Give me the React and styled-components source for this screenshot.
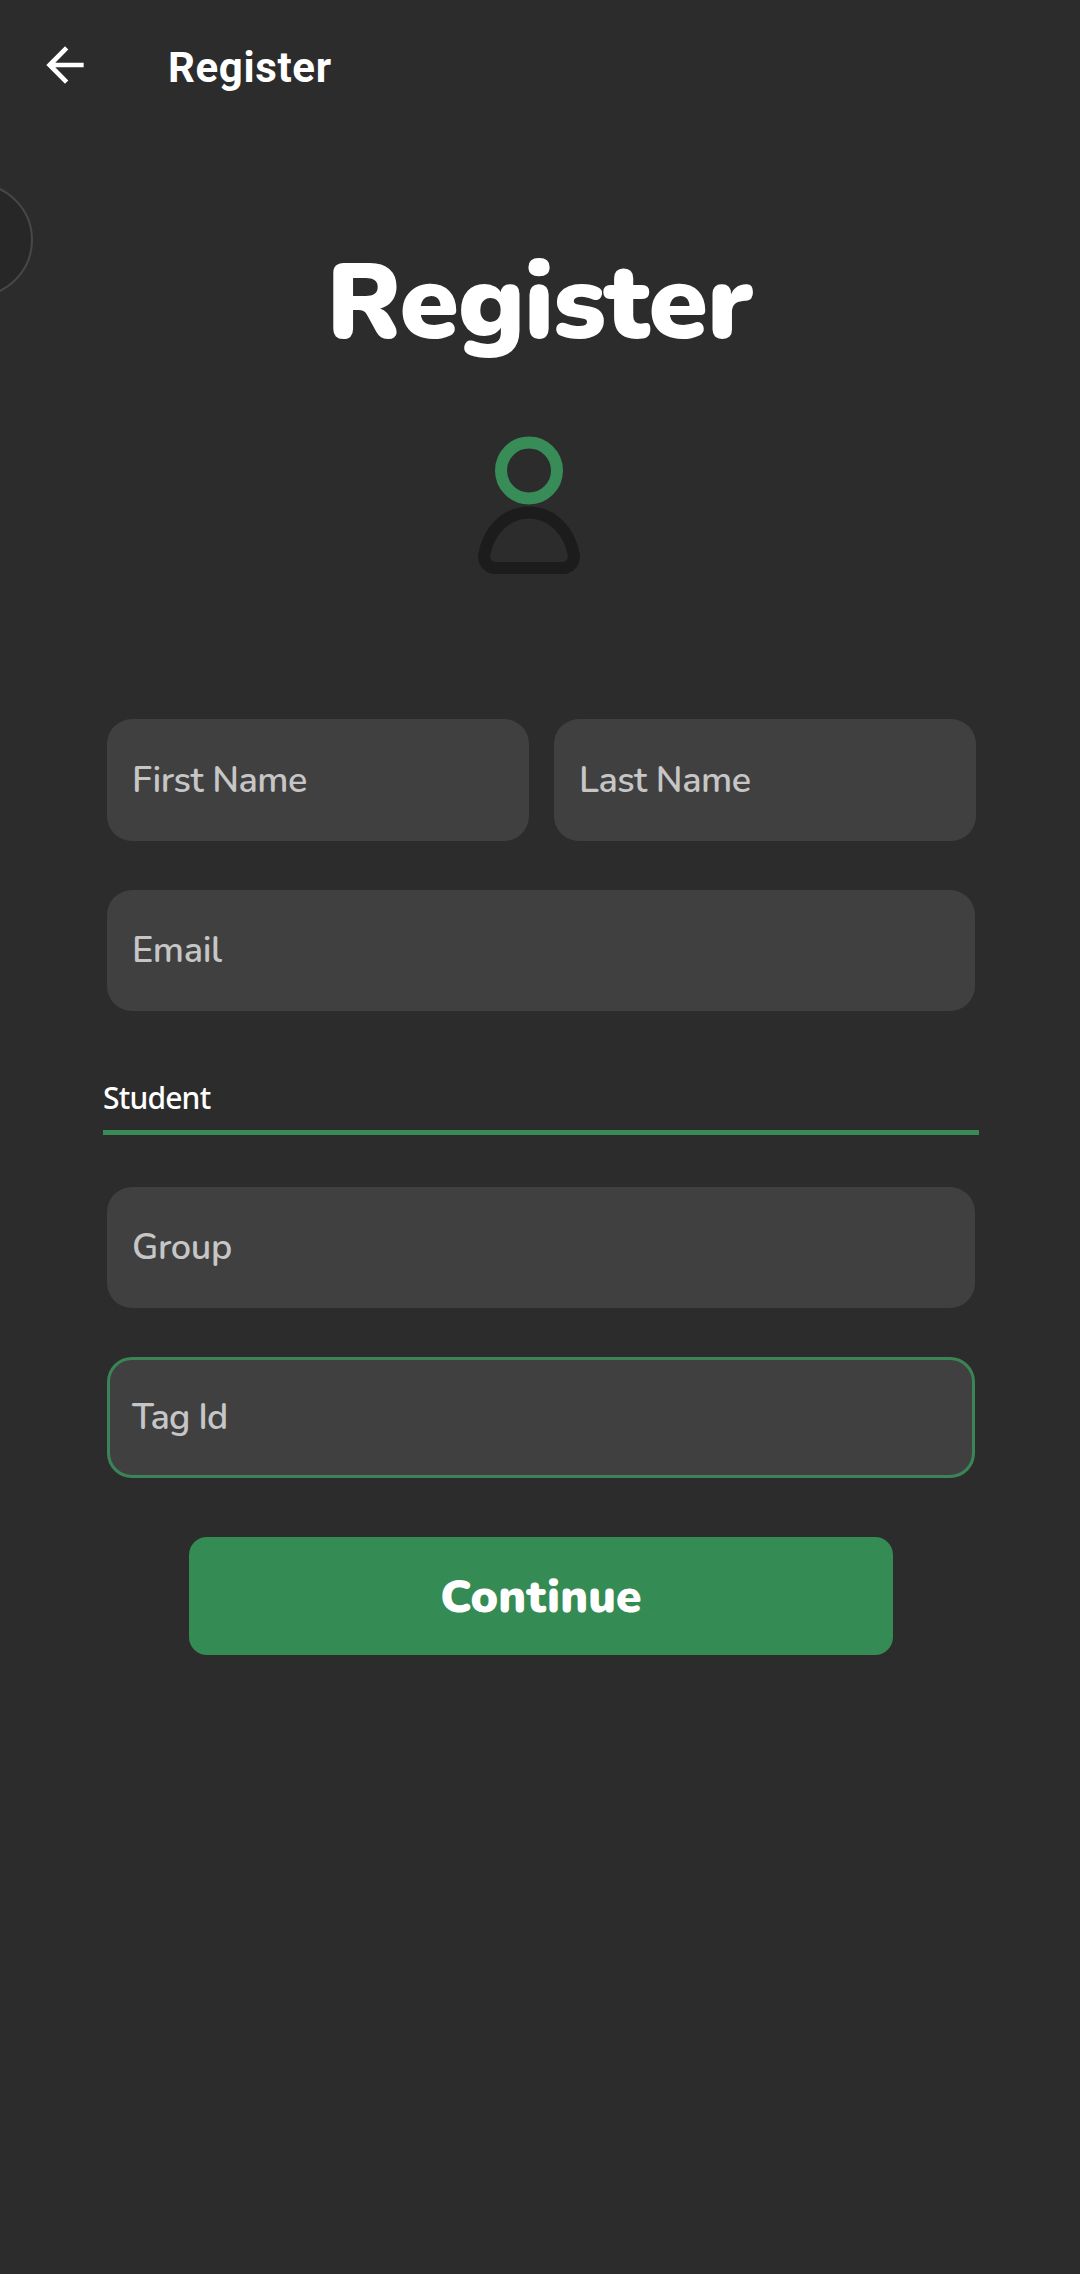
import React from "react";
import styled, { createGlobalStyle } from "styled-components";

const GlobalStyle = createGlobalStyle`
  * { box-sizing: border-box; }
  html, body { margin: 0; background: #2c2c2c; }
`;

const rounded = `"Nunito", "Lato", "Noto Sans", sans-serif`;

const Screen = styled.main`
  position: relative;
  display: flex;
  flex-direction: column;
  width: 1080px;
  height: 2274px;
  overflow: hidden;
  background: #2c2c2c;
  color: #fff;
`;

const TopBar = styled.header`
  display: flex;
  align-items: center;
  height: 130px;
  padding-left: 36.6px;
`;

const BackIcon = styled.svg`
  width: 56px;
  height: 56px;
  fill: #fff;
`;

const BarTitle = styled.span`
  margin: 6px 0 0 75.4px;
  font: 700 42px/56px Roboto, sans-serif;
  letter-spacing: 0.65px;
`;

const EdgeBubble = styled.div`
  position: absolute;
  left: -81px;
  top: 183px;
  width: 114px;
  height: 114px;
  border: 2px solid #484848;
  border-radius: 50%;
  background: #272727;
`;

const Heading = styled.h1`
  margin: 103px 0 0;
  height: 140px;
  padding-right: 1px;
  text-align: center;
  font: 900 107px/140px ${rounded};
  letter-spacing: -1px;
`;

const Avatar = styled.svg`
  width: 140px;
  height: 170px;
  margin: 47px 0 0 459px;
  fill: none;
  stroke-width: 12;
`;

const Form = styled.form`
  display: flex;
  flex-direction: column;
  margin-top: 129px;
  padding: 0 105px 0 107px;
`;

const NameRow = styled.div`
  display: flex;
  gap: 25px;
  margin-right: -1px;
`;

const Field = styled.label`
  display: flex;
  flex: ${(p) => (p.$half ? "1" : "none")};
  align-items: center;
  height: ${(p) => (p.$half ? 122 : 121)}px;
  margin-top: ${(p) => p.$gap || 0}px;
  padding: ${(p) => (p.$half ? 2 : 0)}px ${(p) => (p.$active ? 22 : 25)}px 0;
  border: ${(p) => (p.$active ? "3px solid #3a8456" : "none")};
  border-radius: 25px;
  background: #404040;
`;

const Placeholder = styled.span`
  font: 600 36px/48px ${rounded};
  letter-spacing: ${(p) => p.$track || -0.35}px;
  color: #c6c6c6;
`;

const Picker = styled.div`
  height: 65px;
  margin: 59px -4px 0;
  padding-top: 7px;
  border-bottom: 5px solid #388b56;
  font: 500 30px/42px "Noto Sans", sans-serif;
  letter-spacing: -0.8px;
`;

const Submit = styled.button`
  width: 704px;
  height: 118px;
  margin: 59px 0 0 82px;
  padding: 1px 0 0;
  border: 0;
  border-radius: 18px;
  background: #348b53;
  color: #fff;
  font: 900 46px/60px ${rounded};
  letter-spacing: 0.2px;
`;

export default function App() {
  return (
    <>
      <GlobalStyle />
      <Screen>
        <TopBar>
          <BackIcon viewBox="0 0 24 24">
            <path d="M20 11H7.83l5.59-5.59L12 4l-8 8 8 8 1.41-1.41L7.83 13H20v-2z" />
          </BackIcon>
          <BarTitle>Register</BarTitle>
        </TopBar>
        <EdgeBubble />
        <Heading>Register</Heading>
        <Avatar viewBox="459 420 140 170">
          <circle cx="529" cy="470.5" r="28" stroke="#378c57" />
          <path
            d="M529 512.5C506 512.5 488 531 484 556C484 563 489 568 495 568H563C569 568 574 563 574 556C570 531 552 512.5 529 512.5Z"
            stroke="#1c1c1c"
            strokeLinejoin="round"
          />
        </Avatar>
        <Form>
          <NameRow>
            <Field $half>
              <Placeholder $track={-0.45}>First Name</Placeholder>
            </Field>
            <Field $half>
              <Placeholder $track={-0.45}>Last Name</Placeholder>
            </Field>
          </NameRow>
          <Field $gap={49}>
            <Placeholder>Email</Placeholder>
          </Field>
          <Picker>Student</Picker>
          <Field $gap={52}>
            <Placeholder>Group</Placeholder>
          </Field>
          <Field $gap={49} $active>
            <Placeholder $track={-0.8}>Tag Id</Placeholder>
          </Field>
          <Submit type="button">Continue</Submit>
        </Form>
      </Screen>
    </>
  );
}
